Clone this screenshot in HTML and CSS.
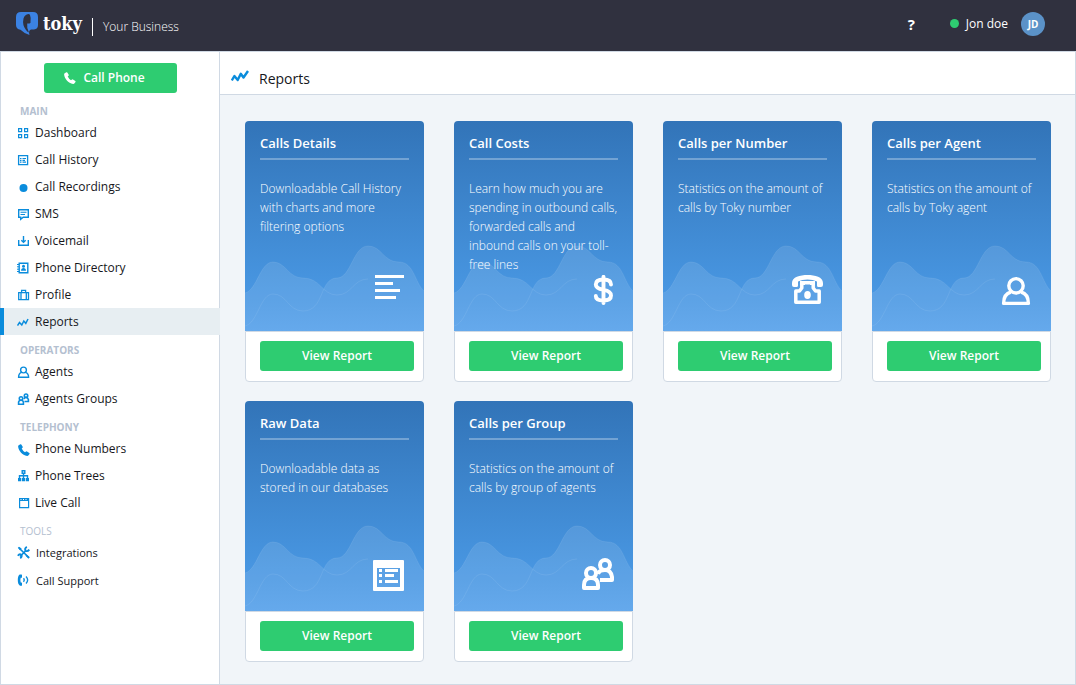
FILE: index.html
```html
<!DOCTYPE html>
<html lang="en">
<head>
<meta charset="utf-8">
<meta name="viewport" content="width=device-width, initial-scale=1">
<title>Toky - Reports</title>
<link rel="stylesheet" href="styles.css">
</head>
<body>
<svg class="defs" aria-hidden="true">
  <symbol id="waves" viewBox="0 0 179 90" preserveAspectRatio="none">
    <g class="wave-fill">
      <path d="M0 52C12 49 15 21 28 21C41 21 43 37 58 37C76 37 77 54 92 54C107 54 108 38 123 38C138 38 142 54 154 54C168 54 170 72 179 90H0Z"/>
      <path d="M0 85C13 82 15 53 28 53C42 53 43 70 58 70C80 70 74 37 92 37C106 37 108 5 123 5C137 5 138 21 154 21C169 21 170 42 179 50V90H0Z"/>
    </g>
    <path class="wave-line" d="M0 52C12 49 15 21 28 21C41 21 43 37 58 37C76 37 77 54 92 54C107 54 108 38 123 38"/>
    <path class="wave-line" d="M0 85C13 82 15 53 28 53C42 53 43 70 58 70C80 70 74 37 92 37C106 37 108 5 123 5C137 5 138 21 154 21C169 21 170 42 179 50"/>
  </symbol>
  <symbol id="handset" viewBox="0 0 12 12">
    <path fill="currentColor" d="M.7 1.2 2.4.2Q3 0 3.3.5L4.7 2.8Q5 3.4 4.500 3.800L3.700 4.500Q4.700 6.700 7 8.200L8 7.500Q8.500 7.200 9 7.500L11.300 9Q11.900 9.500 11.500 10L10.300 11.500Q9.900 12 9.100 11.900C4.200 11.200.400 6.700.100 2.300Q.100 1.600.700 1.200Z"/>
  </symbol>
  <symbol id="trend" viewBox="0 0 18 12">
    <path fill="none" stroke="currentColor" stroke-width="2.400" stroke-linejoin="round" d="M.800 10.500 3.400 6 6.700 10 9.800 3.800 12.500 7.500 17 1"/>
  </symbol>
</svg>

<header class="topbar">
  <div class="brand">
    <svg class="brand-mark" viewBox="0 0 22 24" aria-hidden="true">
      <path fill="#3b82e3" d="M5 0H17Q22 0 22 5V13Q22 17 18 17.500H15Q12 18.500 13.500 23Q7.500 21 4.500 17.800Q0 17 0 13V5Q0 0 5 0Z"/>
      <path fill="#30313f" d="M12.500 2Q8.500 2.500 7.500 6.500Q6 13 10 18Q11.500 20 13 20.500Q10.500 16.500 11.200 11.500H13.500Q15 11.200 14.500 9.500Q15 5.500 14 3Q13.500 2 12.500 2Z"/>
    </svg>
    <span class="brand-name">toky</span>
    <span class="brand-business">Your Business</span>
  </div>
  <div class="account">
    <button class="help" type="button" aria-label="Help">?</button>
    <span class="status-dot"></span>
    <span class="user-name">Jon doe</span>
    <span class="avatar">JD</span>
  </div>
</header>

<div class="shell">
  <aside class="sidebar">
    <button class="btn call-btn" type="button"><svg class="call-icon" aria-hidden="true"><use href="#handset"/></svg>Call Phone</button>
    <nav>
      <h2 class="group-label">MAIN</h2>
      <a class="nav-item" href="#"><svg class="nav-icon" viewBox="0 0 14 14"><path fill="none" stroke="currentColor" stroke-width="1.200" d="M1.600 2.600h3v3h-3zM7.600 2.600h3v3h-3zM1.600 8.600h3v3h-3zM7.600 8.600h3v3h-3z"/></svg>Dashboard</a>
      <a class="nav-item" href="#"><svg class="nav-icon" viewBox="0 0 14 14"><path fill="none" stroke="currentColor" stroke-width="1.300" d="M1.600 2.600h9v9h-9z"/><path fill="none" stroke="currentColor" stroke-width="1.200" d="M3 5.500h1.500M5.500 5.500H9M3 7.300h1.500M5.500 7.300H8M3 9.200h1.500M5.500 9.200H9"/></svg>Call History</a>
      <a class="nav-item" href="#"><svg class="nav-icon" viewBox="0 0 14 14"><circle cx="6.500" cy="8" r="4" fill="currentColor"/></svg>Call Recordings</a>
      <a class="nav-item" href="#"><svg class="nav-icon" viewBox="0 0 14 14"><path fill="none" stroke="currentColor" stroke-width="1.400" d="M1.700 2.700h9.600v7.600H6.200L3.700 12.300v-2h-2z"/><path fill="none" stroke="currentColor" stroke-width="1.100" d="M3.500 5.300h6M3.500 7.500H8"/></svg>SMS</a>
      <a class="nav-item" href="#"><svg class="nav-icon" viewBox="0 0 14 14"><path fill="none" stroke="currentColor" stroke-width="1.400" d="M1.700 6v5.300h9.600V6M6.500 2v6M4.300 6.200l2.200 2 2.200-2"/></svg>Voicemail</a>
      <a class="nav-item" href="#"><svg class="nav-icon" viewBox="0 0 14 14"><path fill="none" stroke="currentColor" stroke-width="1.400" d="M2.200 2.200h8.600v9.600H2.200z"/><path fill="none" stroke="currentColor" d="M0 3.500h2M0 5.800h2M0 8.200h2M0 10.500h2"/><circle cx="6.500" cy="5.300" r="1.500" fill="currentColor"/><path fill="currentColor" d="M4 9.700Q4.200 7 6.500 7T9 9.700z"/></svg>Phone Directory</a>
      <a class="nav-item" href="#"><svg class="nav-icon" viewBox="0 0 14 14"><path fill="none" stroke="currentColor" stroke-width="1.300" d="M1.700 4.700h9.800v7H1.700zM4 4.700v7M9.300 4.700v7M4.600 4.500V2.300h4v2.200"/></svg>Profile</a>
      <a class="nav-item nav-item-active" href="#" aria-current="page"><svg class="nav-icon" viewBox="0 0 14 14"><path fill="none" stroke="currentColor" stroke-width="1.500" d="M.500 10.500 2.500 7.500 4.800 10 6.800 6 8.800 8.300 11 4"/></svg>Reports</a>

      <h2 class="group-label">OPERATORS</h2>
      <a class="nav-item" href="#"><svg class="nav-icon" viewBox="0 0 14 14"><circle cx="6.500" cy="5" r="2.900" fill="none" stroke="currentColor" stroke-width="1.400"/><path fill="none" stroke="currentColor" stroke-width="1.400" d="M4.500 7.400Q1.600 8.400 1.600 12.300h10Q11.600 8.400 8.500 7.400"/></svg>Agents</a>
      <a class="nav-item" href="#"><svg class="nav-icon" viewBox="0 0 14 14"><g fill="none" stroke="currentColor" stroke-width="1.600"><circle cx="4" cy="6.500" r="1.700"/><path d="M1.600 12.300V10Q2 8.200 4 8.200T6.400 10v2.300z"/><circle cx="9" cy="3.700" r="1.700"/><path d="M7 7.200Q7.200 5.400 9 5.400T11.400 7.500v2H7.500"/></g></svg>Agents Groups</a>

      <h2 class="group-label">TELEPHONY</h2>
      <a class="nav-item" href="#"><svg class="nav-icon" viewBox="-1 -2 14 14"><use href="#handset" width="12" height="12"/></svg>Phone Numbers</a>
      <a class="nav-item" href="#"><svg class="nav-icon" viewBox="0 0 14 14"><path fill="none" stroke="currentColor" stroke-width="1.400" d="M5.200 1.700h2.600v2.600H5.200zM6.500 4.500V9M2.500 9V6.800h8V9"/><path fill="currentColor" d="M1 9h3.200v3.200H1zM4.900 9h3.200v3.200H4.900zM8.800 9H12v3.200H8.800z"/></svg>Phone Trees</a>
      <a class="nav-item" href="#"><svg class="nav-icon" viewBox="0 0 14 14"><path fill="none" stroke="currentColor" stroke-width="1.200" d="M2.600 2.600h9v9h-9z"/><path fill="currentColor" d="M2 2h10v3H2z"/><path stroke="#fff" d="M3.500 3.500h1M6 3.500h1M8.500 3.500h1"/></svg>Live Call</a>

      <h2 class="group-label group-label-light">TOOLS</h2>
      <a class="nav-item nav-item-small" href="#"><svg class="nav-icon" viewBox="0 0 14 14"><path fill="none" stroke="currentColor" stroke-width="1.700" d="M2 2 11.800 11.500M9 4.500 3 10.500"/><path fill="none" stroke="currentColor" stroke-width="1.800" d="M9.800.800Q7.300 2.500 8.500 4.700Q10.500 6 12.300 3.600M3.200 12.200Q5.500 10.800 4.300 8.700Q2.500 7.500 .800 9.700"/><path fill="currentColor" d="M.800 1.700 2 .700 4.700 2.500 3 4.300zM9.500 8.500 12.800 11.300 11.500 12.700 8.500 9.800z"/></svg>Integrations</a>
      <a class="nav-item nav-item-small" href="#"><svg class="nav-icon" viewBox="0 0 14 14"><path fill="currentColor" d="M2.700.500H4.500Q5 .500 5 1V3.300Q5 3.800 4.500 3.800H3.700Q2.900 6.300 3.700 8.500H4.500Q5 8.500 5 9V11.300Q5 11.800 4.500 11.800H3Q.800 10.500.800 6.100T2.700.500Z"/><path fill="none" stroke="currentColor" stroke-width="1.300" d="M6.500 4.300Q8 6 6.500 7.800M9 2.500Q12.300 6 9 9.500"/></svg>Call Support</a>
    </nav>
  </aside>

  <main class="content">
    <div class="page-head">
      <svg class="page-icon" aria-hidden="true"><use href="#trend"/></svg>
      <h1 class="page-title">Reports</h1>
    </div>
    <div class="cards">
      <article class="card">
        <div class="card-body">
          <svg class="card-waves" aria-hidden="true"><use href="#waves"/></svg>
          <h3 class="card-title">Calls Details</h3>
          <p class="card-text">Downloadable Call History with charts and more filtering options</p>
          <svg class="card-icon" viewBox="0 0 32 36"><path fill="#fff" d="M2 0h29v3H2zM2 7h18v3H2zM2 14h25v3H2zM2 21h21v3H2z"/></svg>
        </div>
        <div class="card-foot"><button class="btn" type="button">View Report</button></div>
      </article>
      <article class="card">
        <div class="card-body">
          <svg class="card-waves" aria-hidden="true"><use href="#waves"/></svg>
          <h3 class="card-title">Call Costs</h3>
          <p class="card-text">Learn how much you are spending in outbound calls, forwarded calls and inbound calls on your toll-free lines</p>
          <svg class="card-icon" viewBox="0 0 32 36"><path fill="none" stroke="#fff" stroke-width="3.900" stroke-linecap="round" d="M29 9.500Q29 4.500 21.500 4.500Q13.800 4.500 13.800 9.500Q13.800 13.500 21.500 14.800Q29 16 29 20.500Q29 25.500 21.500 25.500Q13.800 25.500 13.800 21M21.500 1.800V28"/></svg>
        </div>
        <div class="card-foot"><button class="btn" type="button">View Report</button></div>
      </article>
      <article class="card">
        <div class="card-body">
          <svg class="card-waves" aria-hidden="true"><use href="#waves"/></svg>
          <h3 class="card-title">Calls per Number</h3>
          <p class="card-text">Statistics on the amount of calls by Toky number</p>
          <svg class="card-icon" viewBox="0 0 32 36"><path fill="#fff" d="M1 8C1 2 9 0 16.500 0S32 2 32 8V10Q32 12 30 12H27.500Q26 12 26 10.500V6.500Q22 4.500 16.500 4.500T7 6.500V10.500Q7 12 5.500 12H3Q1 12 1 10Z"/><path fill="none" stroke="#fff" stroke-width="3.500" stroke-linejoin="round" d="M10.800 7.800H22.200V13L24.500 16H28.200V27.200H4.800V16H8.500L10.800 13Z"/><path fill="#fff" d="M9 6h5v4H9zM19 6h5v4h-5z"/><ellipse cx="16.500" cy="20" rx="3.300" ry="4" fill="#fff"/></svg>
        </div>
        <div class="card-foot"><button class="btn" type="button">View Report</button></div>
      </article>
      <article class="card">
        <div class="card-body">
          <svg class="card-waves" aria-hidden="true"><use href="#waves"/></svg>
          <h3 class="card-title">Calls per Agent</h3>
          <p class="card-text">Statistics on the amount of calls by Toky agent</p>
          <svg class="card-icon" viewBox="0 0 32 36"><g fill="none" stroke="#fff" stroke-width="3.400" stroke-linejoin="round"><circle cx="16" cy="10.800" r="7.200"/><path d="M11 17Q3.600 19 3.600 28.400H28.400Q28.400 19 21 17"/></g></svg>
        </div>
        <div class="card-foot"><button class="btn" type="button">View Report</button></div>
      </article>
      <article class="card">
        <div class="card-body">
          <svg class="card-waves" aria-hidden="true"><use href="#waves"/></svg>
          <h3 class="card-title">Raw Data</h3>
          <p class="card-text">Downloadable data as stored in our databases</p>
          <svg class="card-icon" viewBox="0 0 32 36"><path fill="#fff" fill-rule="evenodd" d="M1 5H30Q31 5 31 6V35Q31 36 30 36H1Q0 36 0 35V6Q0 5 1 5ZM4 13V32H27V13Z"/><path fill="#fff" d="M6 14h3v3H6zM12 14h13v3H12zM6 19h3v3H6zM12 19h9v3h-9zM6 25h3v3H6zM12 25h13v3H12z"/></svg>
        </div>
        <div class="card-foot"><button class="btn" type="button">View Report</button></div>
      </article>
      <article class="card">
        <div class="card-body">
          <svg class="card-waves" aria-hidden="true"><use href="#waves"/></svg>
          <h3 class="card-title">Calls per Group</h3>
          <p class="card-text">Statistics on the amount of calls by group of agents</p>
          <svg class="card-icon" viewBox="0 0 32 36"><g fill="none" stroke="#fff" stroke-width="4" stroke-linejoin="round"><circle cx="23" cy="10" r="5"/><circle cx="9" cy="18" r="5"/><path d="M2 33V30Q2 23 9 23T16 30V33ZM16 19Q17 15 23 15T30 22V25H18"/></g></svg>
        </div>
        <div class="card-foot"><button class="btn" type="button">View Report</button></div>
      </article>
    </div>
  </main>
</div>
</body>
</html>
```
FILE: styles.css
```css
* { box-sizing: border-box; }

body {
  margin: 0;
  min-height: 100vh;
  display: flex;
  flex-direction: column;
  font: 12px/20px "Open Sans", "Noto Sans", sans-serif;
  color: #16171c;
  background: #f1f5f9;
}

h1, h2, h3, p { margin: 0; }
a { color: inherit; text-decoration: none; }
svg { display: block; flex: none; }
.defs { position: absolute; width: 0; height: 0; }

.topbar {
  display: flex;
  align-items: center;
  justify-content: space-between;
  height: 51px;
  padding: 0 31px 4px 16px;
  background: #30313f;
  color: #fff;
}
.brand { display: flex; align-items: center; }
.brand-mark { width: 22px; height: 24px; }
.brand-name {
  margin-left: 5px;
  font: bold 18px/20px "DejaVu Serif Condensed", "DejaVu Serif", serif;
}
.brand-business {
  margin: 6px 0 0 10px;
  padding-left: 10px;
  border-left: 1px solid #fff;
  font-weight: 300;
  line-height: 18px;
}
.account { display: flex; align-items: center; }
.help {
  padding: 0;
  border: 0;
  background: none;
  color: #fff;
  font: bold 15px/20px "Open Sans", sans-serif;
}
.status-dot {
  width: 9px;
  height: 9px;
  margin-left: 35px;
  border-radius: 50%;
  background: #2ecc71;
}
.user-name { margin-left: 7px; }
.avatar {
  width: 24px;
  height: 24px;
  margin-left: 13px;
  border-radius: 50%;
  background: #5b92c8;
  font-size: 10px;
  font-weight: bold;
  line-height: 24px;
  text-align: center;
}

.shell {
  flex: 1;
  display: flex;
  border: 1px solid #d0d9e4;
  border-left: 0;
}
.sidebar {
  flex: none;
  width: 220px;
  padding-top: 11px;
  border: solid #d0d9e4;
  border-width: 0 1px;
  background: #fff;
}

.btn {
  display: flex;
  align-items: center;
  justify-content: center;
  width: 100%;
  height: 30px;
  padding: 0;
  border: 0;
  border-radius: 3px;
  background: #2ecc71;
  color: #fff;
  font: 600 12px/20px "Open Sans", "Noto Sans", sans-serif;
}
.call-btn {
  width: 133px;
  margin: 0 43px 3px;
  padding-right: 12px;
  gap: 7px;
}
.call-icon { width: 12px; height: 12px; }

.group-label {
  padding: 7px 0 0 19px;
  color: #b4c0d0;
  font-size: 10px;
  font-weight: bold;
  line-height: 16px;
}
.group-label-light { font-weight: normal; }

.nav-item {
  display: flex;
  align-items: center;
  gap: 4px;
  height: 27px;
  margin: 0 -1px;
  padding-left: 17px;
}
.nav-icon { width: 14px; height: 14px; color: #0a8cdc; }
.nav-item-active {
  padding-left: 13px;
  border-left: 4px solid #0a8cdc;
  background: #e7eef2;
}
.nav-item-small { height: 28px; gap: 5px; font-size: 11px; }

.content { flex: 1; min-width: 0; }
.page-head {
  display: flex;
  align-items: center;
  gap: 10px;
  height: 43px;
  padding: 12px 11px 0;
  border-bottom: 1px solid #d0d9e4;
  background: #fff;
}
.page-icon { width: 18px; height: 12px; margin-bottom: 7px; color: #0a8cdc; }
.page-title { font-size: 14px; font-weight: normal; }

.cards {
  display: grid;
  grid-template-columns: repeat(auto-fill, minmax(179px, 1fr));
  gap: 19px 30px;
  padding: 26px 24px 22px 25px;
}
.card { border-radius: 4px; }
.card-body {
  position: relative;
  min-height: 210px;
  padding: 12px 15px;
  border-radius: 4px 4px 0 0;
  background: linear-gradient(#3274b8, #4896e1 80%, #539fea);
  color: #fff;
}
.card-waves { position: absolute; left: 0; bottom: 0; width: 100%; height: 90px; }
.wave-fill { fill: #fff; opacity: .1; }
.wave-line { fill: none; stroke: #fff; stroke-opacity: .08; }
.card-title {
  position: relative;
  padding-bottom: 5px;
  border-bottom: 2px solid rgba(255, 255, 255, .3);
  font-size: 13px;
  font-weight: 600;
  line-height: 20px;
}
.card-text {
  position: relative;
  margin-top: 19px;
  font-weight: 300;
  line-height: 19px;
}
.card-icon { position: absolute; right: 19px; bottom: 20px; width: 32px; height: 36px; }
.card-foot {
  padding: 9px 9px 10px 14px;
  border: 1px solid #d0d9e4;
  border-radius: 0 0 4px 4px;
  background: #fff;
}
```
